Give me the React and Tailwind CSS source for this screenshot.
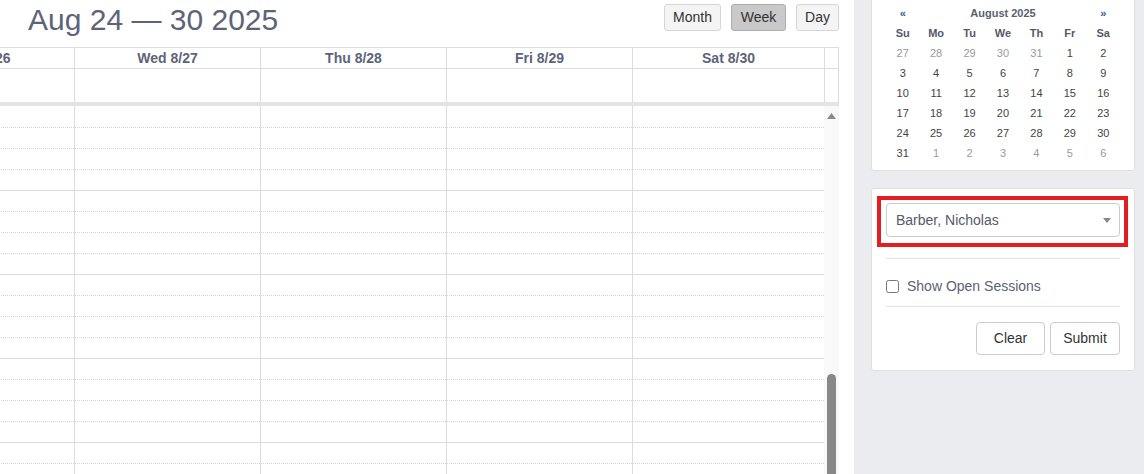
import React from 'react';

const COLS = [
  { label: 'Tue 8/26', w: 'w-[182px]' },
  { label: 'Wed 8/27', w: 'w-[186px] border-l border-[#dddddd]' },
  { label: 'Thu 8/28', w: 'w-[186px] border-l border-[#dddddd]' },
  { label: 'Fri 8/29', w: 'w-[186px] border-l border-[#dddddd]' },
  { label: 'Sat 8/30', w: 'w-[192px] border-l border-[#dddddd]' },
];

const MONTH = [
  [27, 28, 29, 30, 31, 1, 2],
  [3, 4, 5, 6, 7, 8, 9],
  [10, 11, 12, 13, 14, 15, 16],
  [17, 18, 19, 20, 21, 22, 23],
  [24, 25, 26, 27, 28, 29, 30],
  [31, 1, 2, 3, 4, 5, 6],
];

const SLOTS = Array.from({ length: 20 }, (_, i) => i);

function isOther(row, col) {
  if (row === 0) return col < 5;
  if (row === 5) return col > 0;
  return false;
}

export default function App() {
  return (
    <div className="flex h-[474px] w-[1144px] overflow-hidden bg-white font-['Liberation_Sans',Arial,sans-serif]">
      {/* Main calendar */}
      <div className="w-[854px] shrink-0">
        <div className="flex h-[47px] items-start justify-between pl-[28px] pr-[15px]">
          <h1 className="pt-[2px] text-[30px] leading-[36px] text-[#5d6478]">Aug 24 — 30 2025</h1>
          <div className="mt-[4px] flex gap-[10px] text-[14px] text-[#333]">
            <button className="h-[27px] w-[57px] rounded-[3px] border border-[#d6d6d6] bg-[#f4f4f4]">Month</button>
            <button className="h-[27px] w-[55px] rounded-[3px] border border-[#adadad] bg-[#c9c9c9]">Week</button>
            <button className="h-[27px] w-[43px] rounded-[3px] border border-[#d6d6d6] bg-[#f4f4f4]">Day</button>
          </div>
        </div>

        <div className="w-[839px] overflow-hidden">
          <div className="ml-[-108px] w-[947px]">
            {/* day headers */}
            <div className="flex h-[22px] border-y border-[#dddddd]">
              {COLS.map(c => (
                <div key={c.label} className={`${c.w} flex items-center justify-center text-[14px] font-bold text-[#5d6478]`}>
                  {c.label}
                </div>
              ))}
              <div className="w-[15px] border-x border-[#dddddd]" />
            </div>
            {/* all-day row */}
            <div className="flex h-[33px]">
              {COLS.map(c => (
                <div key={c.label} className={c.w} />
              ))}
              <div className="w-[15px] border-x border-[#dddddd]" />
            </div>
            <div className="h-[4px] bg-[#e4e4e4]" />

            {/* time grid */}
            <div className="flex">
              {COLS.map(c => (
                <div key={c.label} className={`${c.w} flex flex-col pt-px`}>
                  {SLOTS.map(i => (
                    <div
                      key={i}
                      className={`h-[21px] border-b ${i % 4 === 3 ? 'border-solid border-[#dddddd]' : 'border-dotted border-[#d4d4d4]'}`}
                    />
                  ))}
                </div>
              ))}
              <div className="flex w-[15px] flex-col bg-[#f9f9f9]">
                <div className="flex h-[20px] items-center justify-center">
                  <svg width="9" height="6" viewBox="0 0 9 6">
                    <path d="M4.5 0 L9 6 L0 6 Z" fill="#8a8a8a" />
                  </svg>
                </div>
                <div className="ml-[3px] mt-[248px] h-[120px] w-[9px] rounded-t-[5px] bg-[#888888]" />
              </div>
            </div>
          </div>
        </div>
      </div>

      {/* Sidebar */}
      <div className="flex w-[290px] shrink-0 flex-col bg-[#ebecf0] pl-[17px] pr-[9px]">
        <div className="-mt-[8px] rounded-[3px] border border-[#e0e0e0] bg-white px-[14px] pb-[7px] pt-[10px]">
          <div className="grid grid-cols-7 text-[11px] font-bold">
            <div className="flex h-[20px] items-center justify-center text-[#2f5d95]">«</div>
            <div className="col-span-5 flex h-[20px] items-center justify-center text-[#5a5f6e]">August 2025</div>
            <div className="flex h-[20px] items-center justify-center text-[#2f5d95]">»</div>
            {['Su', 'Mo', 'Tu', 'We', 'Th', 'Fr', 'Sa'].map(d => (
              <div key={d} className="flex h-[20px] items-center justify-center text-[#55596a]">{d}</div>
            ))}
          </div>
          <div className="grid grid-cols-7 text-[11px]">
            {MONTH.map((row, r) =>
              row.map((d, c) => (
                <div
                  key={`${r}-${c}`}
                  className={`flex h-[20px] items-center justify-center ${isOther(r, c) ? 'text-[#9a9a9a]' : 'text-[#444444]'}`}
                >
                  {d}
                </div>
              ))
            )}
          </div>
        </div>

        <div className="mt-[17px] rounded-[3px] border border-[#e0e0e0] bg-white px-[14px] pb-[15px] pt-[14px]">
          <div className="relative">
            <div className="flex h-[34px] items-center justify-between rounded-[4px] border border-[#cccccc] bg-white pl-[9px] pr-[8px] text-[14px] text-[#555a6a]">
              <span>Barber, Nicholas</span>
              <svg width="8" height="5" viewBox="0 0 8 5">
                <path d="M0 0 L8 0 L4 5 Z" fill="#888888" />
              </svg>
            </div>
            {/* highlight */}
            <div className="pointer-events-none absolute -bottom-[10px] -left-[9px] -right-[8px] -top-[7px] border-4 border-[#e41d21]" />
          </div>
          <div className="mt-[21px] h-px bg-[#e3e3e3]" />
          <label className="mt-[17px] flex h-[20px] items-center gap-[8px] text-[14px] text-[#5b6275]">
            <input type="checkbox" className="m-0 h-[13px] w-[13px]" />
            Show Open Sessions
          </label>
          <div className="mt-[10px] h-px bg-[#e3e3e3]" />
          <div className="mt-[15px] flex justify-end gap-[5px] text-[14px] text-[#333]">
            <button className="h-[33px] w-[69px] rounded-[4px] border border-[#cccccc] bg-white">Clear</button>
            <button className="h-[33px] w-[70px] rounded-[4px] border border-[#cccccc] bg-white">Submit</button>
          </div>
        </div>
      </div>
    </div>
  );
}
